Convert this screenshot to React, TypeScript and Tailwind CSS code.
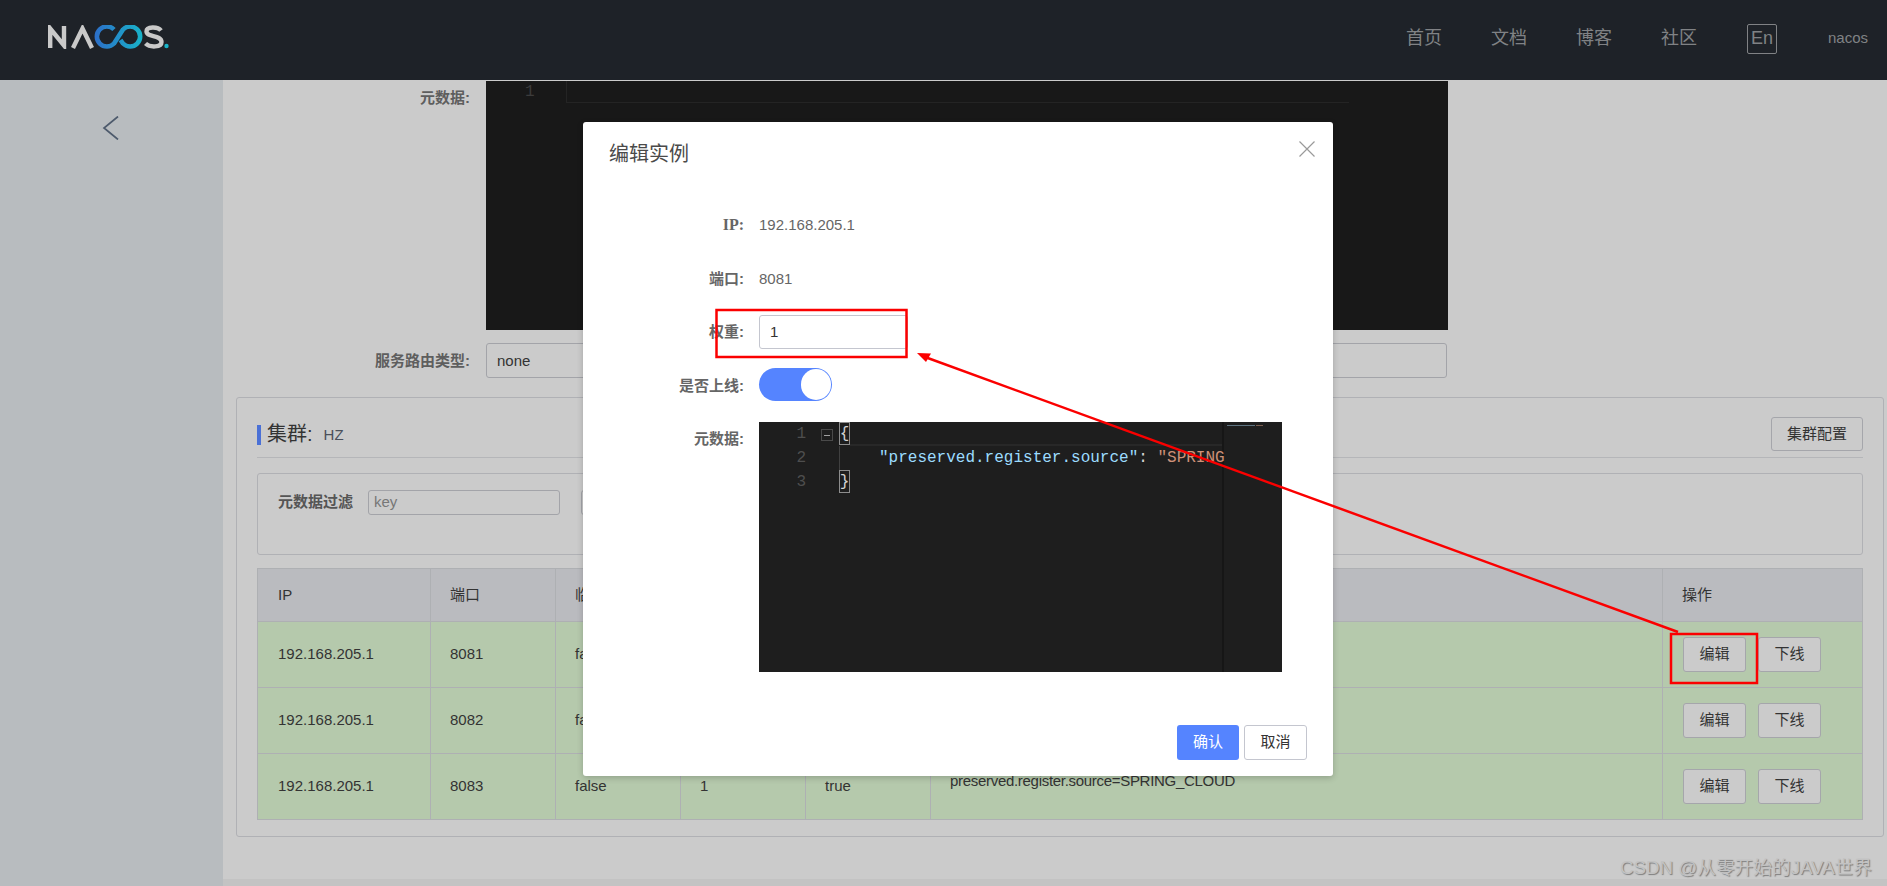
const rows = [
  { ip: "192.168.205.1", port: "8081" },
  { ip: "192.168.205.1", port: "8082" },
  { ip: "192.168.205.1", port: "8083" },
];

const grid = "grid grid-cols-[173px_125px_125px_125px_125px_732px_199px]";
const cell = "flex items-center pl-[19px] border-r border-[#aeb0b3] last:border-r-0";

function Logo() {
  return (
    <svg width="122" height="24" viewBox="0 0 122 24" fill="none" aria-label="NACOS logo">
      <defs>
        <linearGradient id="nacosGrad" x1="45" x2="95" y1="0" y2="0" gradientUnits="userSpaceOnUse">
          <stop offset="0" stopColor="#2d6cc8" />
          <stop offset="1" stopColor="#18b4c9" />
        </linearGradient>
      </defs>
      <path d="M2.2 23V3.5L16 20.5V1" stroke="#c9c9c9" strokeWidth="4.4" />
      <path d="M25 23L34.5 3.5L44 23" stroke="#c9c9c9" strokeWidth="4.4" />
      <path
        d="M66 4.5A10 10 0 1 0 66 18.5L75 4.5A10 10 0 1 1 75 18.5L72.5 15"
        stroke="url(#nacosGrad)"
        strokeWidth="4.6"
      />
      <path
        d="M113 5.5C110 1.5 98.5 1 98.5 6.5C98.5 12.5 113.5 9.5 113.5 17C113.5 22.5 102 22.8 97.5 18.5"
        stroke="#c9c9c9"
        strokeWidth="4.4"
      />
      <circle cx="118.5" cy="21" r="2.2" fill="#18b4c9" />
    </svg>
  );
}

function Annotation() {
  return (
    <svg className="absolute inset-0 pointer-events-none" width="1887" height="886" viewBox="0 0 1887 886" fill="none">
      <rect x="716.5" y="310" width="190" height="47" stroke="#fb0000" strokeWidth="2.5" />
      <rect x="1671" y="634" width="86" height="49" stroke="#fb0000" strokeWidth="2.5" />
      <path d="M1678 632L925 357" stroke="#fb0000" strokeWidth="2.5" />
      <path d="M917 353L931 353.5L926 362Z" fill="#fb0000" />
    </svg>
  );
}

function Dialog() {
  const label = "w-[161px] text-right font-bold text-[#666666] shrink-0";
  return (
    <div className="absolute left-[583px] top-[122px] w-[750px] h-[654px] bg-white rounded-[3px] shadow-[0_2px_6px_rgba(0,0,0,0.2)] text-[#666666]">
      <div className="h-[62px] flex items-center pl-[26px] pt-[1px] text-[20px] text-[#4a4a4a]">编辑实例</div>
      <button className="absolute right-[18px] top-[19px] text-[#9a9a9a]" aria-label="close">
        <svg width="16" height="16" viewBox="0 0 16 16" stroke="currentColor" strokeWidth="1.2" fill="none">
          <path d="M0.5 0.5L15.5 15.5M15.5 0.5L0.5 15.5" />
        </svg>
      </button>
      <div className="pt-[24px] flex flex-col">
        <div className="h-[34px] flex items-center gap-[15px]">
          <div className={`${label} font-['Liberation_Serif',serif] text-[16px]`}>IP:</div>
          <div>192.168.205.1</div>
        </div>
        <div className="h-[34px] mt-5 flex items-center gap-[15px]">
          <div className={label}>端口:</div>
          <div>8081</div>
        </div>
        <div className="h-[34px] mt-[19px] flex items-center gap-[15px]">
          <div className={`${label} pt-px`}>权重:</div>
          <div className="w-[149px] h-[34px] border border-[#c4c6cf] rounded-[3px] flex items-center pl-[10px] pt-px text-[#333333]">1</div>
        </div>
        <div className="h-[33px] mt-[19px] flex items-center gap-[15px]">
          <div className={`${label} pt-[3px]`}>是否上线:</div>
          <div className="w-[73px] h-[33px] rounded-full bg-[#5584ff] flex justify-end items-center pr-px">
            <div className="w-[30px] h-[31px] rounded-full bg-white" />
          </div>
        </div>
        <div className="mt-[21px] flex gap-[15px]">
          <div className={`${label} pt-[6px]`}>元数据:</div>
          <div className="w-[523px] h-[250px] bg-[#1e1e1e] flex overflow-hidden font-['Liberation_Mono',monospace] text-[16px] leading-[24px]">
            <div className="w-[80px] shrink-0 flex">
              <div className="w-[47px] text-right text-[#4e4e4e]">
                <div>1</div>
                <div>2</div>
                <div>3</div>
              </div>
              <div className="ml-[15px] mt-[7px] w-[12px] h-[12px] border border-[#4a4a4a] flex items-center justify-center">
                <div className="w-[6px] h-px bg-[#a0a0a0]" />
              </div>
            </div>
            <div className="w-[385px] shrink-0 border-r-2 border-[#161616]">
              <div className="h-[24px] flex">
                <div className="w-[11px] h-[23px] border border-[#8d8d8d] flex justify-center items-center text-[#d4d4d4] leading-none">{"{"}</div>
                <div className="flex-1 h-[24px] border-b-2 border-[#282828]" />
              </div>
              <div className="h-[24px] flex whitespace-pre pl-[39px] border-l border-[#404040]">
                <span className="text-[#9cdcfe]">"preserved.register.source"</span>
                <span className="text-[#d4d4d4]">: </span>
                <span className="text-[#ce9178]">"SPRING</span>
              </div>
              <div className="w-[11px] h-[23px] border border-[#8d8d8d] flex justify-center items-center text-[#d4d4d4] leading-none">{"}"}</div>
            </div>
            <div className="flex-1 pt-[3px] pl-[3px]">
              <div className="flex h-px gap-px">
                <div className="w-[28px] bg-[#5e7380]" />
                <div className="w-[7px] bg-[#7a5e50]" />
              </div>
            </div>
          </div>
        </div>
        <div className="mt-[53px] pr-[26px] flex justify-end gap-[5px]">
          <button className="w-[62px] h-[35px] rounded-[3px] bg-[#5584ff] text-white">确认</button>
          <button className="w-[63px] h-[35px] rounded-[3px] border border-[#c4c6cf] bg-white text-[#333333]">取消</button>
        </div>
      </div>
    </div>
  );
}

function OpButton({ children }: { children: string }) {
  return (
    <button className="w-[63px] h-[35px] rounded-[3px] border border-[#a5a6ab] bg-[#cbcbcb] text-[#333333]">{children}</button>
  );
}

export default function App() {
  return (
    <div className="relative h-[886px] w-[1887px] overflow-hidden bg-[#cbcbcb] font-['Liberation_Sans','Noto_Sans_CJK_SC',sans-serif] text-[15px] text-[#333333]">
      <header className="h-20 bg-[#1e2228] flex items-center pl-12 text-[#808285]">
        <div className="-mt-[7px]">
          <Logo />
        </div>
        <nav className="ml-auto flex items-center text-[18px] pr-[19px] -mt-[3px]">
          <span className="mr-[49px]">首页</span>
          <span className="mr-[49px]">文档</span>
          <span className="mr-[49px]">博客</span>
          <span className="mr-[50px]">社区</span>
          <span className="w-[30px] h-[30px] border border-[#808285] rounded-[2px] flex items-center justify-center mr-[51px]">En</span>
          <span className="text-[15px]">nacos</span>
        </nav>
      </header>

      <div className="flex h-[806px]">
        <aside className="w-[223px] shrink-0 bg-[#b8bcbf] flex justify-center pt-[36px]">
          <svg width="18" height="24" viewBox="0 0 18 24" fill="none" stroke="#4d5a6c" strokeWidth="1.7" className="-ml-[1px]">
            <path d="M16 0.5L2 12L16 23.5" />
          </svg>
        </aside>

        <main className="flex-1 flex flex-col min-w-0 bg-[#cbcbcb]">
          <div className="pt-px flex gap-4">
            <div className="w-[247px] text-right font-bold text-[#5e5e5e] pt-[6px]">元数据:</div>
            <div className="w-[962px] h-[249px] bg-[#181818] flex font-['Liberation_Mono',monospace] text-[16px] leading-[22px] text-[#3c3c3c]">
              <div className="w-[80px] pl-[39px]">1</div>
              <div className="w-[783px] h-[22px] border-l border-b border-[#242424]" />
            </div>
          </div>

          <div className="mt-[13px] flex gap-4 items-center">
            <div className="w-[247px] text-right font-bold text-[#5e5e5e] pt-px">服务路由类型:</div>
            <div className="w-[961px] h-[35px] border border-[#a3a4a9] rounded-[3px] flex items-center pl-[10px] pt-px">none</div>
          </div>

          <section className="mt-[19px] ml-[13px] mr-[3px] h-[440px] border border-[#b0b1b5] rounded-[3px] pl-[20px] pr-[20px] pt-[20px]">
            <div className="h-[40px] w-[1606px] border-b border-[#b5b6b9] flex items-start">
              <div className="flex items-center">
                <div className="w-[4px] h-[20px] bg-[#4a70d6] mt-[4px]" />
                <div className="ml-[6px] text-[20px] leading-[28px] text-[#333333] mt-[2px]">集群:</div>
                <div className="ml-[11px] text-[15px] text-[#4a4f5a] mt-[5px]">HZ</div>
              </div>
              <button className="ml-auto w-[92px] h-[34px] -mt-px border border-[#a5a6ab] rounded-[3px]">集群配置</button>
            </div>

            <div className="mt-[15px] w-[1606px] h-[82px] border border-[#b0b1b5] rounded-[3px] pl-[20px] pt-[16px] flex items-start">
              <div className="font-bold text-[#555555] leading-[24px] w-[90px]">元数据过滤</div>
              <div className="w-[192px] h-[25px] border border-[#a3a4a9] rounded-[3px] flex items-center pl-[5px] text-[#777777]">key</div>
              <div className="ml-[21px] w-[192px] h-[25px] border border-[#a3a4a9] rounded-[3px]" />
            </div>

            <div className="mt-[13px] w-[1606px] border border-[#aeb0b3]">
              <div className={`${grid} h-[53px] bg-[#babbbf] border-b border-[#aeb0b3]`}>
                <div className={`${cell} pl-[20px]`}>IP</div>
                <div className={cell}>端口</div>
                <div className={cell}>临时实例</div>
                <div className={cell}>权重</div>
                <div className={cell}>健康状态</div>
                <div className={cell}>元数据</div>
                <div className={cell}>操作</div>
              </div>
              {rows.map((r, i) => (
                <div key={r.port} className={`${grid} bg-[#b5c9ac] ${i < 2 ? "h-[66px] border-b border-[#aeb0b3]" : "h-[65px]"}`}>
                  <div className="flex items-center pl-[20px] border-r border-[#aeb0b3]">{r.ip}</div>
                  <div className={cell}>{r.port}</div>
                  <div className={cell}>false</div>
                  <div className={cell}>1</div>
                  <div className={cell}>true</div>
                  <div className={`${cell} pb-[10px] tracking-[-0.3px]`}>preserved.register.source=SPRING_CLOUD</div>
                  <div className="flex items-center pl-[20px] gap-[12px]">
                    <OpButton>编辑</OpButton>
                    <OpButton>下线</OpButton>
                  </div>
                </div>
              ))}
            </div>
          </section>

          <div className="mt-auto h-[7px] bg-[#c3c3c3]" />
        </main>
      </div>

      <Dialog />
      <Annotation />

      <div className="absolute right-[15px] bottom-[6px] text-[18.7px] leading-[24px] text-[#c2c2c2] [text-shadow:1px_1px_1px_#7c7c7c]">
        CSDN @从零开始的JAVA世界
      </div>
    </div>
  );
}
